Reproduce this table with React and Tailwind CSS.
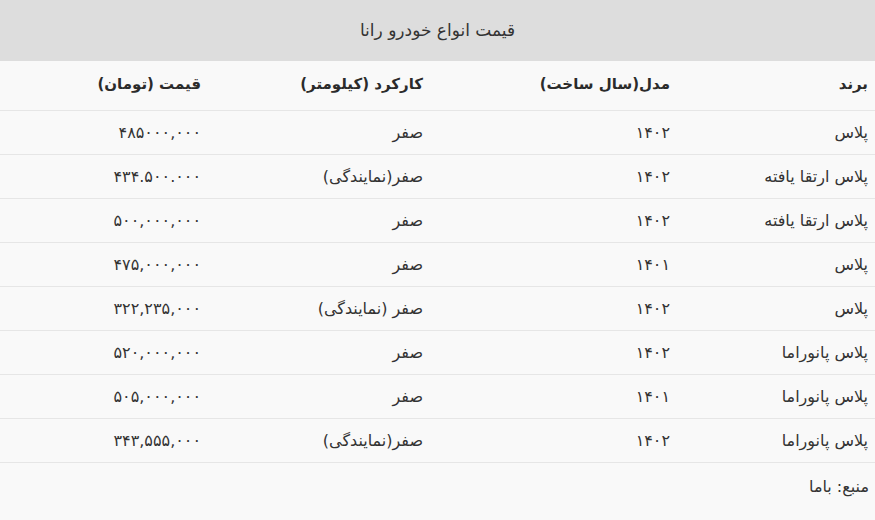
import React from "react";

const rows = [
  ["پلاس", "۱۴۰۲", "صفر", "۴۸۵۰۰۰,۰۰۰"],
  ["پلاس ارتقا یافته", "۱۴۰۲", "صفر(نمایندگی)", "۴۳۴.۵۰۰.۰۰۰"],
  ["پلاس ارتقا یافته", "۱۴۰۲", "صفر", "۵۰۰,۰۰۰,۰۰۰"],
  ["پلاس", "۱۴۰۱", "صفر", "۴۷۵,۰۰۰,۰۰۰"],
  ["پلاس", "۱۴۰۲", "صفر (نمایندگی)", "۳۲۲,۲۳۵,۰۰۰"],
  ["پلاس پانوراما", "۱۴۰۲", "صفر", "۵۲۰,۰۰۰,۰۰۰"],
  ["پلاس پانوراما", "۱۴۰۱", "صفر", "۵۰۵,۰۰۰,۰۰۰"],
  ["پلاس پانوراما", "۱۴۰۲", "صفر(نمایندگی)", "۳۴۳,۵۵۵,۰۰۰"],
];

const widths = ["w-[198px]", "w-[247px]", "w-[222px]", "w-[208px]"];

export default function App() {
  return (
    <div
      dir="rtl"
      className="w-[875px] h-[520px] bg-[#f9f9f9] text-[#333333] text-[16px]"
      style={{ fontFamily: '"DejaVu Sans", "Noto Sans", sans-serif' }}
    >
      <div className="h-[61px] bg-[#dddddd] flex items-center justify-center text-[17px]">
        قیمت انواع خودرو رانا
      </div>
      <div className="flex h-[50px] items-center border-b border-[#e6e6e6] font-bold text-[15px] text-[#2b2b2b] pb-[3px]">
        {["برند", "مدل(سال ساخت)", "کارکرد (کیلومتر)", "قیمت (تومان)"].map((t, i) => (
          <div key={i} className={`${widths[i]} pr-[7px] text-right`}>
            {t}
          </div>
        ))}
      </div>
      {rows.map((r, ri) => (
        <div key={ri} className="flex h-[44px] items-center border-b border-[#e6e6e6]">
          {r.map((t, i) => (
            <div key={i} className={`${widths[i]} pr-[7px] text-right`}>
              {t}
            </div>
          ))}
        </div>
      ))}
      <div className="h-[48px] flex items-center pr-[6px]">منبع: باما</div>
    </div>
  );
}
